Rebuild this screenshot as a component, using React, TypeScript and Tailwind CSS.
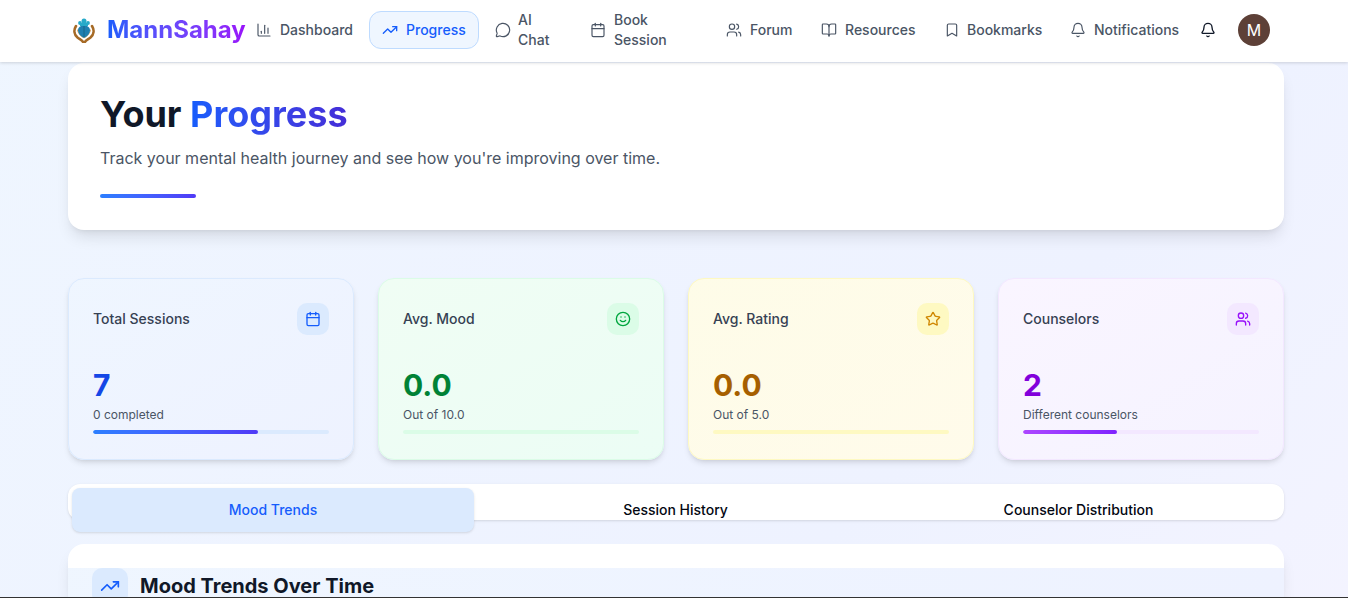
import { BarChart3, Bell, Bookmark, BookOpen, Calendar, MessageCircle, Smile, Star, TrendingUp, Users } from "lucide-react";

function Logo() {
  return (
    <svg width="24" height="26" viewBox="0 0 24 26" className="shrink-0" aria-hidden="true">
      <path d="M4 9C1.5 13 2 17.5 5.5 20.5c2.2 1.8 4.4 2.6 5.6 4.5" fill="none" stroke="#a66a26" strokeWidth="2.6" strokeLinecap="round" />
      <path d="M20 9c2.5 4 2 8.5-1.500 11.500-2.200 1.800-4.400 2.600-5.600 4.500" fill="none" stroke="#a66a26" strokeWidth="2.6" strokeLinecap="round" />
      <path d="M5.500 13c.8 3 3 5.500 5.800 7.500M18.500 13c-.8 3-3 5.500-5.800 7.500" fill="none" stroke="#e0ad6a" strokeWidth="1.200" strokeLinecap="round" />
      <path d="M12 21c-3.600-1.800-6-4.600-6-7.800C6 10.400 8.600 8.500 12 8.500s6 1.900 6 4.700c0 3.200-2.400 6-6 7.800z" fill="#1f7fb0" />
      <path d="M12 9v11" stroke="#145f80" strokeWidth="0.8" />
      <circle cx="12" cy="4" r="2.500" fill="#27aac9" />
      <circle cx="8" cy="6" r="1.900" fill="#27aac9" />
      <circle cx="16" cy="6" r="1.900" fill="#27aac9" />
      <rect x="8" y="6" width="8" height="3" fill="#27aac9" />
    </svg>
  );
}

function NavItem({ icon: Icon, label, active, className = "" }: { icon: any; label: string; active?: boolean; className?: string }) {
  return (
    <a
      className={`flex items-center gap-2 rounded-xl border px-3 py-2 text-sm font-medium leading-5 ${
        active ? "border-blue-200 bg-blue-50 text-blue-600" : "border-transparent text-gray-600"
      } ${className}`}
    >
      <Icon className="h-4 w-4 shrink-0" strokeWidth={active ? 2 : 1.75} />
      <span>{label}</span>
    </a>
  );
}

function StatCard({
  title, value, sub, icon: Icon, card, box, iconColor, valueColor, track, bar, pct,
}: {
  title: string; value: string; sub: string; icon: any; card: string; box: string; iconColor: string; valueColor: string; track: string; bar: string; pct: number;
}) {
  return (
    <div className={`flex h-[182px] flex-col rounded-2xl border bg-gradient-to-br p-6 shadow-md ${card}`}>
      <div className="flex items-center justify-between">
        <span className="text-sm font-medium text-gray-700">{title}</span>
        <div className={`flex h-8 w-8 items-center justify-center rounded-[10px] ${box}`}>
          <Icon className={`h-4 w-4 ${iconColor}`} />
        </div>
      </div>
      <div className={`mt-[32px] text-3xl font-bold leading-9 ${valueColor}`}>{value}</div>
      <div className="mt-1 text-xs leading-4 text-gray-600">{sub}</div>
      <div className={`mt-[7px] h-1 w-full overflow-hidden rounded-full ${track}`}>
        <div className={`h-full rounded-full bg-gradient-to-r ${bar}`} style={{ width: `${pct}%` }} />
      </div>
    </div>
  );
}

export default function App() {
  return (
    <div
      className="flex h-[598px] flex-col overflow-hidden border-b border-[#333333] bg-gradient-to-br from-blue-50 via-indigo-50 to-purple-50 bg-[length:100%_1400px] bg-no-repeat text-gray-900"
      style={{ fontFamily: "Inter, 'Liberation Sans', sans-serif" }}
    >
      <header className="relative z-10 h-[62px] shrink-0 bg-white shadow-[0_1px_3px_rgba(0,0,0,0.15)]">
        <div className="flex h-[60px] items-center pl-[72px]">
          <div className="flex w-[171px] shrink-0 items-center gap-[11px]">
            <Logo />
            <span className="bg-gradient-to-r from-blue-600 to-purple-600 bg-clip-text text-2xl font-bold text-transparent">MannSahay</span>
          </div>
          <nav className="flex items-center gap-1">
            <NavItem icon={BarChart3} label="Dashboard" className="w-[122px]" />
            <NavItem icon={TrendingUp} label="Progress" active className="w-[110px]" />
            <NavItem icon={MessageCircle} label="AI Chat" className="-ml-[1px] w-[91px] gap-[7px]!" />
            <NavItem icon={Calendar} label="Book Session" className="w-[104px]" />
            <NavItem icon={Users} label="Forum" className="ml-[28px] w-[91px]" />
            <NavItem icon={BookOpen} label="Resources" className="w-[119px]" />
            <NavItem icon={Bookmark} label="Bookmarks" className="w-[122px] gap-[7px]!" />
            <NavItem icon={Bell} label="Notifications" className="w-[136px]" />
          </nav>
          <Bell className="ml-[7px] h-4 w-4 shrink-0 text-gray-900" />
          <div className="ml-[22px] flex h-8 w-8 shrink-0 items-center justify-center rounded-full bg-[#5d4037] text-base text-white">M</div>
        </div>
      </header>

      <main className="pl-[68px] pr-[64px] pt-px">
        <section className="h-[167px] rounded-2xl bg-white px-8 pt-[26px] shadow-lg">
          <h1 className="text-4xl font-bold leading-[50px]">
            Your <span className="bg-gradient-to-r from-blue-600 to-indigo-700 bg-clip-text text-transparent">Progress</span>
          </h1>
          <p className="mt-[7px] text-base leading-6 text-gray-600">Track your mental health journey and see how you're improving over time.</p>
          <div className="mt-6 h-1 w-24 rounded-full bg-gradient-to-r from-blue-500 to-indigo-600" />
        </section>

        <section className="mt-12 grid grid-cols-4 gap-6">
          <StatCard title="Total Sessions" value="7" sub="0 completed" icon={Calendar} card="border-blue-100 from-blue-50 to-indigo-50" box="bg-blue-100" iconColor="text-blue-600" valueColor="text-blue-700" track="bg-blue-100" bar="from-blue-500 to-indigo-600" pct={70} />
          <StatCard title="Avg. Mood" value="0.0" sub="Out of 10.0" icon={Smile} card="border-green-100 from-green-50 to-emerald-50" box="bg-green-100" iconColor="text-green-600" valueColor="text-green-700" track="bg-green-100" bar="from-green-500 to-emerald-500" pct={0} />
          <StatCard title="Avg. Rating" value="0.0" sub="Out of 5.0" icon={Star} card="border-yellow-100 from-yellow-50 to-amber-50" box="bg-yellow-100" iconColor="text-yellow-600" valueColor="text-yellow-700" track="bg-yellow-100" bar="from-yellow-500 to-amber-500" pct={0} />
          <StatCard title="Counselors" value="2" sub="Different counselors" icon={Users} card="border-purple-100 from-purple-50 to-violet-50" box="bg-purple-100" iconColor="text-purple-600" valueColor="text-purple-700" track="bg-purple-100" bar="from-purple-500 to-violet-600" pct={40} />
        </section>

        <section className="mt-6 flex h-9 items-start rounded-xl bg-white p-1 shadow-sm">
          <button className="h-11 w-[402px] shrink-0 rounded-lg bg-blue-100 text-sm font-medium text-blue-600 shadow-sm">Mood Trends</button>
          <button className="h-11 flex-1 text-sm font-medium text-gray-950">Session History</button>
          <button className="h-11 flex-1 text-sm font-medium text-gray-950">Counselor Distribution</button>
        </section>

        <section className="mt-6 rounded-2xl bg-white pt-6 shadow-lg">
          <div className="flex gap-3 bg-gradient-to-r from-blue-50 to-indigo-50 px-6">
            <div className="flex h-9 w-9 items-center justify-center rounded-[10px] bg-blue-100">
              <TrendingUp className="h-5 w-5 text-blue-600" />
            </div>
            <h2 className="text-xl font-bold leading-9">Mood Trends Over Time</h2>
          </div>
        </section>
      </main>
    </div>
  );
}
